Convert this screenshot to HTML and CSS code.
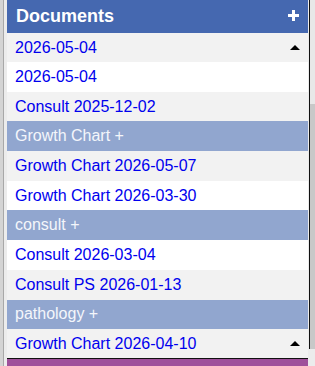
FILE: index.html
```html
<!DOCTYPE html>
<html>
<head>
<meta charset="utf-8">
<link rel="stylesheet" href="styles.css">
</head>
<body>
<div class="frame">
  <div class="edge-left"><div class="edge-line"></div></div>
  <div class="main">
    <div class="panel">
      <div class="panel-head">
        <span class="title">Documents</span>
        <svg class="plus" width="11" height="11" viewBox="0 0 11 11"><rect x="4" y="0" width="3" height="11" fill="#fff"/><rect x="0" y="4" width="11" height="3" fill="#fff"/></svg>
      </div>
      <div class="row gray toggle"><span class="link">2026-05-04</span><span class="tri"></span></div>
      <div class="row white"><span class="link">2026-05-04</span></div>
      <div class="row gray"><span class="link">Consult 2025-12-02</span></div>
      <div class="row group">Growth Chart +</div>
      <div class="row gray"><span class="link">Growth Chart 2026-05-07</span></div>
      <div class="row white"><span class="link">Growth Chart 2026-03-30</span></div>
      <div class="row group">consult +</div>
      <div class="row white"><span class="link">Consult 2026-03-04</span></div>
      <div class="row gray"><span class="link">Consult PS 2026-01-13</span></div>
      <div class="row group">pathology +</div>
      <div class="row gray toggle"><span class="link">Growth Chart 2026-04-10</span><span class="tri"></span></div>
    </div>
    <div class="footer-bar"></div>
  </div>
  <div class="edge-right">
    <div class="gap"></div>
    <div class="scrollbar">
      <div class="scroll-line"></div>
      <div class="scroll-track">
        <div class="track-top"></div>
        <div class="thumb"></div>
      </div>
    </div>
  </div>
</div>
</body>
</html>
```
FILE: styles.css
```css
html, body {
  margin: 0;
  padding: 0;
  background: #f0f0f0;
  font-family: "Liberation Sans", Arial, sans-serif;
}
.frame {
  display: flex;
  width: 315px;
  height: 366px;
  overflow: hidden;
}
.edge-left {
  width: 7px;
  display: flex;
  background: #ececec;
}
.edge-left::before {
  content: "";
  width: 3px;
  background: #d4d4d4;
}
.edge-line {
  width: 1px;
  background: #a8a8a8;
}
.main {
  width: 301px;
  display: flex;
  flex-direction: column;
}
.panel {
  display: flex;
  flex-direction: column;
  border-bottom: 1px solid #111;
}
.panel-head {
  background: #4568b0;
  height: 33px;
  display: flex;
  align-items: center;
  justify-content: space-between;
  padding: 0 9px 0 9px;
  box-sizing: border-box;
}
.title {
  color: #fff;
  font-weight: bold;
  font-size: 18px;
  margin-top: -1px;
}
.plus {
  margin-top: -3px;
}
.row {
  height: 29.7px;
  display: flex;
  align-items: center;
  justify-content: space-between;
  padding: 0 7px 0 8px;
  box-sizing: border-box;
  font-size: 16px;
}
.row.gray { background: #f2f2f2; }
.row.white { background: #ffffff; }
.row.group {
  background: #91a6cf;
  color: #f4f6fb;
}
.row.toggle { height: 29px; }
.link { color: #0000ee; }
.tri {
  width: 0;
  height: 0;
  border-left: 5px solid transparent;
  border-right: 5px solid transparent;
  border-bottom: 5px solid #000;
  margin-right: 1px;
}
.footer-bar {
  flex: 1;
  background: #9f509b;
}
.edge-right {
  width: 7px;
  display: flex;
  background: #ececec;
}
.gap {
  width: 1px;
  background: #ececec;
}
.scrollbar {
  flex: 1;
  height: 349px;
  display: flex;
}
.scroll-line {
  width: 1px;
  background: #111;
}
.scroll-track {
  flex: 1;
  display: flex;
  flex-direction: column;
  background: #e8e8e8;
}
.track-top {
  height: 104px;
}
.thumb {
  flex: 1;
  background: #c8c8c8;
}
```
